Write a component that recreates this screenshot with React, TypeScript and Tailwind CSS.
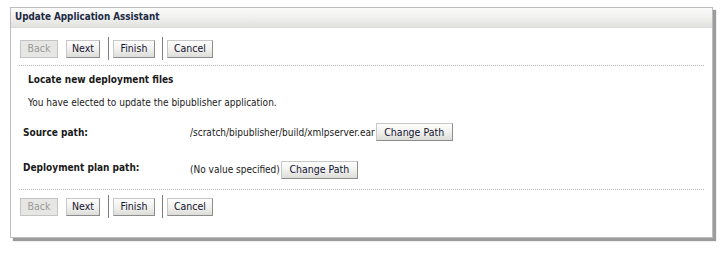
import React from "react";

const font = { fontFamily: '"DejaVu Sans Condensed", "DejaVu Sans", Tahoma, sans-serif' };

function Btn({ label, w, disabled }: { label: string; w: string; disabled?: boolean }) {
  return (
    <div
      className={
        "h-[18px] flex items-center justify-center text-[10.5px] leading-none border " +
        w +
        " " +
        (disabled
          ? "border-[#c4c4c4] bg-[#e6e6e4] text-[#9a9a9a]"
          : "border-t-[#c8c8c8] border-l-[#c8c8c8] border-r-[#8c8c8c] border-b-[#8c8c8c] bg-gradient-to-b from-[#fdfdfd] via-[#f1f1ef] to-[#dcdcd8] text-[#141430]")
      }
    >
      {label}
    </div>
  );
}

function Sep() {
  return <div className="w-px h-[23px] bg-[#7d7d7d]" />;
}

function ButtonRow() {
  return (
    <div className="flex items-center h-[23px] pl-[9px]">
      <Btn label="Back" w="w-[38px]" disabled />
      <div className="w-[8px]" />
      <Btn label="Next" w="w-[34px]" />
      <div className="w-[8px]" />
      <Sep />
      <div className="w-[4px]" />
      <Btn label="Finish" w="w-[42px]" />
      <div className="w-[7px]" />
      <Sep />
      <div className="w-[4px]" />
      <Btn label="Cancel" w="w-[46px]" />
    </div>
  );
}

function Dotted() {
  return <div className="mx-[8px] border-t border-dotted border-[#b8b8b8]" />;
}

export default function App() {
  return (
    <div className="w-[720px] h-[268px] bg-white pt-[7px] pl-[10px]" style={font}>
      <div className="w-[703px] h-[231px] border border-[#bdbdbd] bg-white shadow-[3px_3px_1px_#9c9c9c] flex flex-col">
        <div className="h-[20px] flex items-center pl-[4px] bg-gradient-to-b from-[#fbfbfb] via-[#f0f0ef] to-[#e2e2e0] border-b border-[#dadada]">
          <span className="text-[9.8px] font-bold text-[#1d2a44]">Update Application Assistant</span>
        </div>
        <div className="h-[9px]" />
        <ButtonRow />
        <div className="h-[5px]" />
        <Dotted />
        <div className="h-[6px]" />
        <div className="h-[14px] flex items-center pl-[17px] text-[10px] font-bold text-[#1a1a1a]">
          Locate new deployment files
        </div>
        <div className="h-[9px]" />
        <div className="h-[14px] flex items-center pl-[17px] text-[10px] text-[#1a1a1a]">
          You have elected to update the bipublisher application.
        </div>
        <div className="h-[14px]" />
        <div className="flex items-center h-[18px] pl-[12px] text-[10px] text-[#1a1a1a]">
          <div className="w-[167px] font-bold">Source path:</div>
          <span>/scratch/bipublisher/build/xmlpserver.ear</span>
          <div className="ml-[1px]">
            <Btn label="Change Path" w="w-[77px]" />
          </div>
        </div>
        <div className="h-[19px]" />
        <div className="flex h-[19px] pl-[12px] text-[10px] text-[#1a1a1a]">
          <div className="w-[167px] font-bold">Deployment plan path:</div>
          <div className="flex items-center">
            <span>(No value specified)</span>
            <div className="ml-[1px]">
              <Btn label="Change Path" w="w-[77px]" />
            </div>
          </div>
        </div>
        <div className="h-[10px]" />
        <Dotted />
        <div className="h-[5px]" />
        <ButtonRow />
      </div>
    </div>
  );
}
